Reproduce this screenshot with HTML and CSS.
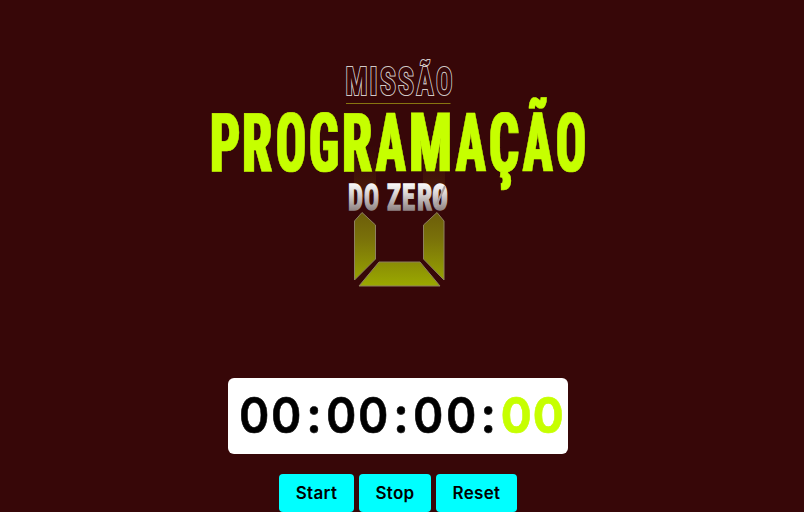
FILE: index.html
```html
<!DOCTYPE html>
<html lang="pt-BR">
<head>
<meta charset="utf-8">
<title>Missão Programação do Zero</title>
<link rel="stylesheet" href="styles.css">
</head>
<body>
<main class="page">
  <svg class="logo" viewBox="200 50 400 250" width="400" height="250" role="img">
    <defs>
      <filter id="widen" x="-5%" y="-10%" width="110%" height="120%"><feMorphology operator="dilate" radius="1 0.01"/></filter>
      <linearGradient id="bar" gradientUnits="userSpaceOnUse" x1="0" y1="211" x2="0" y2="287"><stop offset="0" stop-color="#6c5c0a"/><stop offset=".35" stop-color="#79700a"/><stop offset="1" stop-color="#9baa00"/></linearGradient>
      <linearGradient id="silver" gradientUnits="userSpaceOnUse" x1="0" y1="182" x2="0" y2="211"><stop offset="0" stop-color="#fff"/><stop offset=".4" stop-color="#dad5d5"/><stop offset="1" stop-color="#8c8080"/></linearGradient>
      <linearGradient id="fade" x1="0" y1="0" x2="0" y2="1"><stop offset="0" stop-color="#4b200a" stop-opacity="0"/><stop offset="1" stop-color="#512309" stop-opacity=".8"/></linearGradient>
    </defs>
    <path fill="url(#fade)" d="M354 145h22v45l-11 9-11-9zM423 145h22v45l-11 9-11-9z"/>
    <text class="mission" y="95">
      <tspan x="345.500" textLength="22" lengthAdjust="spacingAndGlyphs">M</tspan><tspan x="369.500" textLength="8" lengthAdjust="spacingAndGlyphs">I</tspan><tspan x="380" textLength="16" lengthAdjust="spacingAndGlyphs">S</tspan><tspan x="398" textLength="16" lengthAdjust="spacingAndGlyphs">S</tspan><tspan x="416.500" textLength="17" lengthAdjust="spacingAndGlyphs">Ã</tspan><tspan x="436" textLength="16.500" lengthAdjust="spacingAndGlyphs">O</tspan>
    </text>
    <path class="rule" d="M346 103.5h104.500"/>
    <g filter="url(#widen)">
      <text class="title" y="170.500">
        <tspan x="210" textLength="30" lengthAdjust="spacingAndGlyphs">P</tspan><tspan x="242" textLength="30" lengthAdjust="spacingAndGlyphs">R</tspan><tspan x="276" textLength="30" lengthAdjust="spacingAndGlyphs">O</tspan><tspan x="309" textLength="30" lengthAdjust="spacingAndGlyphs">G</tspan><tspan x="342" textLength="30" lengthAdjust="spacingAndGlyphs">R</tspan><tspan x="376" textLength="29.500" lengthAdjust="spacingAndGlyphs">A</tspan><tspan x="409" textLength="43" lengthAdjust="spacingAndGlyphs">M</tspan><tspan x="456" textLength="29.500" lengthAdjust="spacingAndGlyphs">A</tspan><tspan x="489" textLength="30" lengthAdjust="spacingAndGlyphs">Ç</tspan><tspan x="523" textLength="29.500" lengthAdjust="spacingAndGlyphs">Ã</tspan><tspan x="556" textLength="30" lengthAdjust="spacingAndGlyphs">O</tspan>
      </text>
    </g>
    <text class="zero" y="209.500">
      <tspan x="348" textLength="15" lengthAdjust="spacingAndGlyphs">D</tspan><tspan x="364" textLength="15" lengthAdjust="spacingAndGlyphs">O</tspan> <tspan x="387" textLength="14" lengthAdjust="spacingAndGlyphs">Z</tspan><tspan x="402" textLength="13" lengthAdjust="spacingAndGlyphs">E</tspan><tspan x="417" textLength="15" lengthAdjust="spacingAndGlyphs">R</tspan><tspan x="432" textLength="16" lengthAdjust="spacingAndGlyphs">0</tspan>
    </text>
    <path class="slash" d="M435.500 207L445 186"/>
    <path class="segment" d="M354.500 221L362 212.500L375.500 225V259L354.500 280ZM444 221L437 212.500L423.500 225V259L444 280ZM379 262h41l20 24h-81z"/>
  </svg>
  <section class="clock">
    <span class="digit">0</span><span class="digit">0</span><span class="colon">:</span><span class="digit">0</span><span class="digit">0</span><span class="colon">:</span><span class="digit">0</span><span class="digit">0</span><span class="colon">:</span><span class="digit accent">0</span><span class="digit accent">0</span>
  </section>
  <div class="controls">
    <button class="start">Start</button>
    <button class="stop">Stop</button>
    <button class="reset">Reset</button>
  </div>
</main>
</body>
</html>
```
FILE: styles.css
```css
* { box-sizing: border-box; }
body { margin: 0; background: #370708; overflow: hidden; }
.page { height: 512px; padding-top: 50px; display: flex; flex-direction: column; align-items: center; padding-right: 8px; }
.logo { flex: none; margin-left: 4px; overflow: visible; }
.logo text { font-family: "Roboto Condensed", "Liberation Sans Narrow", Roboto, sans-serif; font-weight: 700; }
.logo .mission { font-size: 39.5px; fill: #370708; stroke: #d2c9c7; stroke-width: 2.2; paint-order: stroke; }
.logo .title { font-size: 82px; fill: #c6ff00; stroke: #c6ff00; stroke-width: .6; }
.logo .zero { font-size: 37px; fill: url(#silver); stroke: url(#silver); stroke-width: 1.6; }
.rule { stroke: #887510; stroke-width: 1; }
.slash { stroke: #aaa0a0; stroke-width: 2; }
.segment { fill: url(#bar); stroke: #8d805f; stroke-width: 1; stroke-linejoin: round; }
.clock { flex: none; width: 340px; height: 76px; margin-top: 78px; padding: 0 0 2px 10px; background: #fff; border-radius: 6px; display: flex; align-items: center; font: 600 50px/74px Inter, sans-serif; color: #000; }
.digit { width: 32.3px; display: flex; justify-content: center; transform: scaleX(.92); -webkit-text-stroke: .6px currentColor; }
.colon { width: 22.6px; display: flex; justify-content: center; -webkit-text-stroke: .6px currentColor; }
.accent { color: #c6ff00; font-weight: 700; }
.controls { flex: none; display: flex; gap: 5px; margin-top: 20px; }
button { height: 38px; padding: 0; border: 0; border-radius: 4px; background: #0ff; color: #000; font: 600 17px/38px Inter, sans-serif; letter-spacing: .3px; }
.start { width: 75px; }
.stop { width: 72px; }
.reset { width: 81px; }
```
